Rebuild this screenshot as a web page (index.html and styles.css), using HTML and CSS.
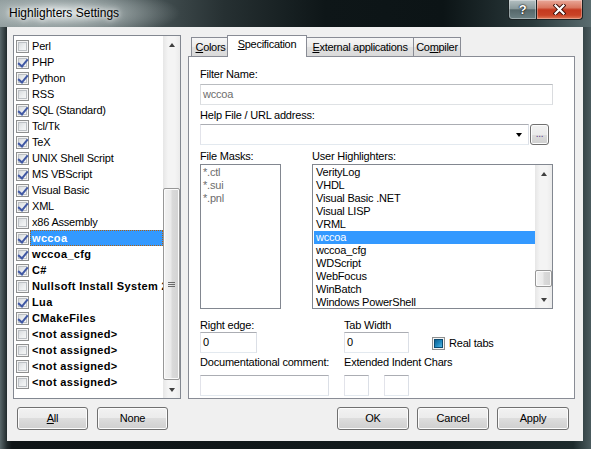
FILE: index.html
```html
<!DOCTYPE html>
<html>
<head>
<meta charset="utf-8">
<link rel="stylesheet" href="styles.css">
</head>
<body>
<div class="window">
  <div class="titlebar">
    <span class="title">Highlighters Settings</span>
    <div class="caption">
      <div class="cbtn help">?</div>
      <div class="cbtn close">
        <svg width="13" height="11" viewBox="0 0 13 11"><path d="M2.5 1.5 L10.5 9.5 M10.5 1.5 L2.5 9.5" stroke="#3a0b05" stroke-width="4" stroke-linecap="square" fill="none"/><path d="M2.5 1.5 L10.5 9.5 M10.5 1.5 L2.5 9.5" stroke="#fff" stroke-width="2.2" stroke-linecap="square" fill="none"/></svg>
      </div>
    </div>
  </div>
  <div class="framebody">
    <div class="client">
      <div class="main">
        <div class="listbox langs">
          <div class="items">
            <div class="row"><span class="cb"></span><span class="lt">Perl</span></div>
            <div class="row"><span class="cb on"></span><span class="lt">PHP</span></div>
            <div class="row"><span class="cb on"></span><span class="lt">Python</span></div>
            <div class="row"><span class="cb"></span><span class="lt">RSS</span></div>
            <div class="row"><span class="cb on"></span><span class="lt">SQL (Standard)</span></div>
            <div class="row"><span class="cb"></span><span class="lt">Tcl/Tk</span></div>
            <div class="row"><span class="cb on"></span><span class="lt">TeX</span></div>
            <div class="row"><span class="cb on"></span><span class="lt">UNIX Shell Script</span></div>
            <div class="row"><span class="cb on"></span><span class="lt">MS VBScript</span></div>
            <div class="row"><span class="cb on"></span><span class="lt">Visual Basic</span></div>
            <div class="row"><span class="cb on"></span><span class="lt">XML</span></div>
            <div class="row"><span class="cb"></span><span class="lt">x86 Assembly</span></div>
            <div class="row b"><span class="cb on"></span><span class="lt sel">wccoa</span></div>
            <div class="row b"><span class="cb on"></span><span class="lt">wccoa_cfg</span></div>
            <div class="row b"><span class="cb on"></span><span class="lt">C#</span></div>
            <div class="row b"><span class="cb"></span><span class="lt">Nullsoft Install System 2</span></div>
            <div class="row b"><span class="cb on"></span><span class="lt">Lua</span></div>
            <div class="row b"><span class="cb on"></span><span class="lt">CMakeFiles</span></div>
            <div class="row b"><span class="cb"></span><span class="lt">&lt;not assigned&gt;</span></div>
            <div class="row b"><span class="cb"></span><span class="lt">&lt;not assigned&gt;</span></div>
            <div class="row b"><span class="cb"></span><span class="lt">&lt;not assigned&gt;</span></div>
            <div class="row b"><span class="cb"></span><span class="lt">&lt;not assigned&gt;</span></div>
          </div>
          <div class="vscroll">
            <div class="sbtn"><span class="arr up"></span></div>
            <div class="track">
              <div class="thumb big"><span class="grip"></span></div>
            </div>
            <div class="sbtn"><span class="arr down"></span></div>
          </div>
        </div>

        <div class="tabctl">
          <div class="tabstrip">
            <div class="tab t1"><u>C</u>olors</div>
            <div class="tab sel t2"><u>S</u>pecification</div>
            <div class="tab t3"><u>E</u>xternal applications</div>
            <div class="tab t4">Co<u>m</u>piler</div>
          </div>
          <div class="page">
            <div class="lbl">Filter Name:</div>
            <div class="edit dis filter">wccoa</div>
            <div class="lbl gap4">Help File / URL address:</div>
            <div class="comborow">
              <div class="edit combo"><span class="carr"></span></div>
              <div class="minibtn">...</div>
            </div>
            <div class="lists">
              <div class="lcol">
                <div class="lbl">File Masks:</div>
                <div class="listbox masks">
                  <div class="items plain">
                    <div class="prow">*.ctl</div>
                    <div class="prow">*.sui</div>
                    <div class="prow">*.pnl</div>
                  </div>
                </div>
              </div>
              <div class="lcol">
                <div class="lbl">User Highlighters:</div>
                <div class="listbox user">
                  <div class="items plain">
                    <div class="urow">VerityLog</div>
                    <div class="urow">VHDL</div>
                    <div class="urow">Visual Basic .NET</div>
                    <div class="urow">Visual LISP</div>
                    <div class="urow">VRML</div>
                    <div class="urow usel">wccoa</div>
                    <div class="urow">wccoa_cfg</div>
                    <div class="urow">WDScript</div>
                    <div class="urow">WebFocus</div>
                    <div class="urow">WinBatch</div>
                    <div class="urow">Windows PowerShell</div>
                  </div>
                  <div class="vscroll">
                    <div class="sbtn"><span class="arr up"></span></div>
                    <div class="track">
                      <div class="thumb small"></div>
                    </div>
                    <div class="sbtn"><span class="arr down"></span></div>
                  </div>
                </div>
              </div>
            </div>
            <div class="bottomgrid">
              <div class="lbl">Right edge:</div>
              <div class="lbl">Tab Width</div>
              <div></div>
              <div class="edit re">0</div>
              <div class="edit tw">0</div>
              <div class="realtabs"><span class="cb ind"><span class="indsq"></span></span><span>Real tabs</span></div>
              <div class="lbl lbl2">Documentational comment:</div>
              <div class="lbl lbl2">Extended Indent Chars</div>
              <div></div>
              <div class="edit doc"></div>
              <div class="ext"><div class="edit sm"></div><div class="edit sm"></div></div>
              <div></div>
            </div>
          </div>
        </div>
      </div>
      <div class="footer">
        <div class="btn lb"><u>A</u>ll</div>
        <div class="btn lb">None</div>
        <div class="spacer"></div>
        <div class="btn rb">OK</div>
        <div class="btn rb">Cancel</div>
        <div class="btn rb">Apply</div>
      </div>
    </div>
  </div>
</div>
</body>
</html>
```

FILE: styles.css
```css
* { box-sizing: border-box; }
html, body { margin: 0; padding: 0; }
body {
  width: 591px; height: 449px; overflow: hidden;
  font-family: "Liberation Sans", Arial, sans-serif;
  font-size: 11px; color: #000; letter-spacing: -0.2px;
  background: #1b2325;
}
u { text-decoration: underline; text-underline-offset: 1px; }

.window {
  width: 591px; height: 449px;
  display: flex; flex-direction: column;
  background: linear-gradient(to right, #59676a 0, #20292b 1.2%, #0f1517 2%, #101719 40%, #141d1f 75%, #1d2a2c 97%, #4b5b5e 100%);
}

.titlebar {
  height: 27px; flex: none;
  display: flex; align-items: flex-start;
  background:
    radial-gradient(ellipse 120px 26px at 60px 13px, rgba(230,236,236,0.95) 0, rgba(190,200,200,0.6) 45%, rgba(120,132,134,0) 100%),
    linear-gradient(to right, #7e8b8c 0, #5a6769 18%, #263032 38%, #0e1618 55%, #0c1416 75%, #2a393b 90%, #5a6c6f 100%);
}
.title {
  padding-left: 9px; line-height: 27px;
  font-size: 12px; color: #000; letter-spacing: 0;
  text-shadow: 0 0 5px #fff, 0 0 9px rgba(255,255,255,0.9);
}
.caption { margin-left: auto; margin-right: 8px; display: flex; }
.cbtn {
  height: 20px; border: 1px solid #1a2224; border-top: none;
  display: flex; align-items: center; justify-content: center;
}
.help {
  width: 29px; border-radius: 0 0 0 4px;
  background: linear-gradient(#b4c0c2 0, #8a9a9c 45%, #56686b 52%, #6c8083 100%);
  box-shadow: inset 0 0 0 1px rgba(255,255,255,0.35);
  color: #fff; font-weight: bold; font-size: 13px;
  text-shadow: 0 0 2px #000, 0 0 1px #000;
}
.close {
  width: 46px; border-left: none; border-radius: 0 0 4px 0;
  background: linear-gradient(#e9a899 0, #d9765f 40%, #c5391f 52%, #c94326 80%, #e07a58 100%);
  box-shadow: inset 0 0 0 1px rgba(255,255,255,0.3);
}

.framebody { flex: 1; padding: 0 8px 8px 7px; }
.client {
  height: 414px; background: #f0f0f0;
  display: flex; flex-direction: column;
  padding: 8px 8px 0 6px;
}
.main { display: flex; gap: 7px; height: 364px; }

/* list boxes */
.listbox {
  background: #fff; border: 1px solid #828790;
  display: flex; overflow: hidden;
}
.langs { width: 168px; height: 364px; }
.items { flex: 1; min-width: 0; overflow: hidden; }
.langs .items { padding: 2px 0 0 2px; }
.row { height: 16px; display: flex; align-items: center; }
.row.b { font-weight: bold; letter-spacing: 0.35px; }
.lt {
  flex: 1; min-width: 0; height: 16px; line-height: 16px;
  margin-left: 1px; padding-left: 2px;
  white-space: nowrap; overflow: hidden;
}
.lt.sel { background: #3399ff; color: #fff; outline: 1px dotted #b06010; outline-offset: -1px; }

.cb {
  width: 13px; height: 13px; flex: none;
  border: 1px solid #8e8f8f;
  background: linear-gradient(135deg, #cfd2d6 0, #eceeef 55%, #fbfbfb 100%);
  box-shadow: inset 0 0 0 1px #f4f4f4, inset 0 0 0 2px #bcc0c4;
  position: relative;
}
.cb.on::after {
  content: ""; position: absolute; left: 2px; top: 0px;
  width: 4px; height: 8px;
  border: solid #4058a4; border-width: 0 2px 2px 0;
  transform: translate(1px, 0) rotate(40deg);
}
.cb.ind { display: flex; align-items: center; justify-content: center; }
.indsq {
  width: 9px; height: 9px;
  background: linear-gradient(135deg, #0f5e8e 0, #1e87bd 50%, #52b4e2 100%);
  border: 1px solid #0b4a70;
}

/* scrollbars */
.vscroll {
  width: 17px; flex: none;
  display: flex; flex-direction: column;
  background: linear-gradient(to right, #e6e6e6, #f4f4f4 30%, #f4f4f4 70%, #ebebeb);
}
.sbtn { height: 17px; flex: none; display: flex; align-items: center; justify-content: center; }
.arr { width: 0; height: 0; border-left: 3.5px solid transparent; border-right: 3.5px solid transparent; }
.arr.up { border-bottom: 4px solid #3f3f3f; }
.arr.down { border-top: 4px solid #3f3f3f; }
.track { flex: 1; display: flex; flex-direction: column; }
.thumb {
  border: 1px solid #979797; border-radius: 2px;
  background: linear-gradient(to right, #f2f2f2 0, #eaeaea 45%, #dadada 55%, #d2d2d2 100%);
  box-shadow: inset 0 0 0 1px #fbfbfb;
  display: flex; align-items: center; justify-content: center;
}
.thumb.big { margin-top: 135px; height: 192px; }
.thumb.small { margin-top: 88px; height: 17px; }
.grip {
  width: 7px; height: 5px;
  background: linear-gradient(#6a6a6a 0, #6a6a6a 1px, transparent 1px, transparent 2px, #6a6a6a 2px, #6a6a6a 3px, transparent 3px, transparent 4px, #6a6a6a 4px);
}

/* tab control */
.tabctl { flex: 1; display: flex; flex-direction: column; }
.tabstrip { height: 21px; flex: none; display: flex; align-items: flex-end; padding-left: 3px; }
.tab {
  height: 19px; line-height: 18px; text-align: center;
  border: 1px solid #898c95; border-bottom: none; margin-right: -1px;
  background: linear-gradient(#f6f6f6 0, #ebebeb 50%, #e0e0e0 51%, #dadada 100%);
  white-space: nowrap; letter-spacing: -0.3px;
}
.tab.sel {
  height: 22px; line-height: 17px; margin: 0 -1px -1px -2px;
  background: #fff; position: relative; z-index: 1;
}
.t1 { width: 39px; }
.t2 { width: 80px; }
.t3 { width: 108px; }
.t4 { width: 48px; }

.page {
  flex: 1; background: #fff; border: 1px solid #898c95;
  padding: 11px 0 0 11px;
}
.lbl { height: 13px; line-height: 13px; white-space: nowrap; }
.gap4 { margin-top: 4px; }
.edit {
  height: 21px; background: #fff;
  border: 1px solid; border-color: #abadb3 #dbdfe6 #e3e9ef #e2e3ea;
  padding: 0 2px; line-height: 19px;
}
.edit.dis { color: #6d6d6d; border-color: #b9bcc0 #dadcdf #dfe2e5 #dadcdf; }
.filter { width: 353px; margin-top: 3px; }
.comborow { display: flex; gap: 1px; margin-top: 2px; }
.combo { width: 329px; display: flex; align-items: center; justify-content: flex-end; padding-right: 6px; }
.carr { width: 0; height: 0; border-left: 3.5px solid transparent; border-right: 3.5px solid transparent; border-top: 4px solid #000; }
.minibtn {
  width: 19px; height: 21px;
  border: 1px solid #707070; border-radius: 3px;
  background: linear-gradient(#f2f2f2 0, #ebebeb 50%, #dddddd 50%, #cfcfcf 100%);
  box-shadow: inset 0 0 0 1px #fcfcfc;
  text-align: center; line-height: 17px; font-size: 10px; color: #5b3b86;
}

.lists { display: grid; grid-template-columns: 112px 241px; margin-top: 5px; }
.lcol { display: flex; flex-direction: column; gap: 1px; }
.masks { width: 81px; height: 145px; }
.user { width: 241px; height: 145px; }
.items.plain { padding-top: 1px; }
.prow { height: 13px; line-height: 13px; padding-left: 2px; color: #6d6d6d; white-space: nowrap; }
.urow { height: 13px; line-height: 13px; padding-left: 3px; white-space: nowrap; }
.urow.usel { background: #3399ff; color: #fff; margin-left: 1px; padding-left: 2px; }

.bottomgrid {
  display: grid; grid-template-columns: 144px 88px auto;
  grid-template-rows: 13px 21px 16px 27px;
  margin-top: 10px;
}
.bottomgrid .lbl2 { align-self: end; }
.re { width: 57px; }
.tw { width: 65px; }
.doc { width: 129px; margin-top: 6px; }
.ext { display: flex; gap: 15px; margin-top: 6px; }
.sm { width: 25px; }
.realtabs { display: flex; align-items: center; gap: 4px; height: 21px; padding-top: 1px; }

/* footer */
.footer { display: flex; margin-top: 8px; height: 23px; padding-left: 4px; padding-right: 6px; }
.spacer { flex: 1; }
.btn {
  height: 23px; border: 1px solid #707070; border-radius: 3px;
  background: linear-gradient(#f2f2f2 0, #ebebeb 50%, #dddddd 50%, #cfcfcf 100%);
  box-shadow: inset 0 0 0 1px #fcfcfc;
  text-align: center; line-height: 21px;
}
.lb { width: 71px; margin-right: 9px; }
.rb { width: 72px; margin-left: 8px; }
```
